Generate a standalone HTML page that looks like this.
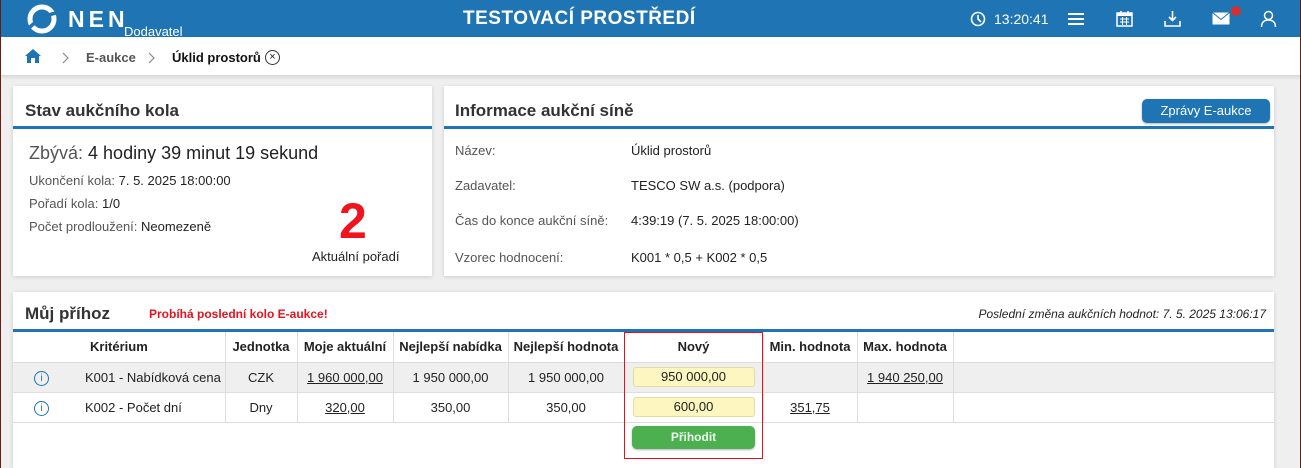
<!DOCTYPE html>
<html><head><meta charset="utf-8"><style>
*{box-sizing:border-box;margin:0;padding:0}
html,body{width:1301px;height:468px;overflow:hidden}
body{background:#efefef;font-family:"Liberation Sans",sans-serif;font-size:13px;color:#222;position:relative}
.edge{position:absolute;top:0;bottom:0;width:1px;background:#6b1a14}
.hdr{position:absolute;left:0;top:0;width:1301px;height:37px;background:#1f75b3;color:#fff}
.bc{position:absolute;left:0;top:37px;width:1301px;height:38px;background:#fff;box-shadow:0 2px 4px rgba(0,0,0,.12)}
.panel{position:absolute;background:#fff;box-shadow:0 1px 4px rgba(0,0,0,.15)}
.ptitle{font-size:17px;font-weight:bold;color:#333;position:absolute}
.bar{position:absolute;height:3px;background:#1f75b3}
.lbl{color:#555}
td,th{border-right:1px solid #ddd;text-align:center;font-size:13px;height:30px;padding:0}
th{font-weight:bold;color:#222}
tr.r td{border-top:1px solid #ddd}
.inp{display:inline-block;width:122px;height:20px;background:#fdf6c0;border:1px solid #e4dca0;border-radius:3px;line-height:18px;font-size:13px}
</style></head><body>
<div class="hdr">
 <svg style="position:absolute;left:27px;top:4px" width="30" height="30" viewBox="0 0 30 30"><circle cx="15" cy="15" r="12" fill="none" stroke="#fff" stroke-width="5"/><path d="M2 24 Q14 12 29 9" stroke="#1f75b3" stroke-width="3.5" fill="none"/></svg>
 <div style="position:absolute;left:68px;top:6px;font-size:23px;font-weight:bold;letter-spacing:4px">NEN</div>
 <div style="position:absolute;left:124px;top:24px;font-size:13px">Dodavatel</div>
 <div style="position:absolute;left:463px;top:8px;font-size:19px;font-weight:bold;letter-spacing:.5px">TESTOVACÍ PROSTŘEDÍ</div>
 <svg style="position:absolute;left:970px;top:11px" width="16" height="16" viewBox="0 0 16 16"><circle cx="8" cy="8" r="6.5" fill="none" stroke="#fff" stroke-width="1.6"/><path d="M8 4v4l3 3" stroke="#fff" stroke-width="1.6" fill="none"/></svg>
 <div style="position:absolute;left:994px;top:11px;font-size:14px">13:20:41</div>
 <svg style="position:absolute;left:1068px;top:12px" width="16" height="14"><path d="M0 2h16M0 7h16M0 12h16" stroke="#fff" stroke-width="2"/></svg>
 <svg style="position:absolute;left:1116px;top:10px" width="17" height="17" viewBox="0 0 17 17"><rect x="1" y="3" width="15" height="13" fill="none" stroke="#fff" stroke-width="1.5"/><rect x="1" y="3" width="15" height="3" fill="#fff"/><path d="M5 1v3M12 1v3" stroke="#fff" stroke-width="1.5"/><path d="M4 9h9M4 12h9M6.5 7v8M10.5 7v8" stroke="#fff"/></svg>
 <svg style="position:absolute;left:1164px;top:10px" width="17" height="17" viewBox="0 0 17 17"><path d="M8.5 1v9M5 7l3.5 3.5L12 7M1 11v5h15v-5" stroke="#fff" stroke-width="1.6" fill="none"/></svg>
 <svg style="position:absolute;left:1212px;top:12px" width="18" height="13"><rect x=".5" y=".5" width="17" height="12" fill="#fff"/><path d="M.5 .5l8.5 7 8.5-7" stroke="#1f75b3" fill="none"/></svg>
 <div style="position:absolute;left:1231px;top:6px;width:10px;height:10px;border-radius:50%;background:#d32f2f"></div>
 <svg style="position:absolute;left:1260px;top:10px" width="17" height="18" viewBox="0 0 17 18"><circle cx="8.5" cy="5.5" r="4" fill="none" stroke="#fff" stroke-width="1.5"/><path d="M1.5 17c0-5 3-7 7-7s7 2 7 7" fill="none" stroke="#fff" stroke-width="1.5"/></svg>
</div>
<div class="bc">
 <svg style="position:absolute;left:24px;top:11px" width="18" height="16" viewBox="0 0 18 16"><path d="M9 1L1 8h2v7h4v-5h4v5h4V8h2z" fill="#1f75b3"/></svg>
 <svg style="position:absolute;left:62px;top:15px" width="8" height="12"><path d="M1 1l5 5-5 5" stroke="#888" fill="none" stroke-width="1.2"/></svg>
 <div style="position:absolute;left:86px;top:13px;color:#555;font-weight:bold;font-size:13px">E-aukce</div>
 <svg style="position:absolute;left:148px;top:15px" width="8" height="12"><path d="M1 1l5 5-5 5" stroke="#888" fill="none" stroke-width="1.2"/></svg>
 <div style="position:absolute;left:172px;top:13px;font-weight:bold;font-size:13px;color:#111">Úklid prostorů</div>
 <div style="position:absolute;left:265px;top:13px;width:15px;height:15px;border:1px solid #333;border-radius:50%;font-size:11px;line-height:12px;text-align:center">×</div>
</div>

<div class="panel" style="left:13px;top:86px;width:419px;height:190px">
 <div class="ptitle" style="left:12px;top:15px">Stav aukčního kola</div>
 <div class="bar" style="left:0;top:40px;width:419px"></div>
 <div style="position:absolute;left:16px;top:57px;font-size:18px"><span class="lbl">Zbývá:</span> 4 hodiny 39 minut 19 sekund</div>
 <div style="position:absolute;left:16px;top:87px"><span class="lbl">Ukončení kola:</span> 7. 5. 2025 18:00:00</div>
 <div style="position:absolute;left:16px;top:110px"><span class="lbl">Pořadí kola:</span> 1/0</div>
 <div style="position:absolute;left:16px;top:133px"><span class="lbl">Počet prodloužení:</span> Neomezeně</div>
 <div style="position:absolute;left:326px;top:110px;font-size:50px;color:#f0141e;font-weight:bold;line-height:50px">2</div>
 <div style="position:absolute;left:299px;top:163px">Aktuální pořadí</div>
</div>

<div class="panel" style="left:444px;top:86px;width:830px;height:190px">
 <div class="ptitle" style="left:11px;top:15px">Informace aukční síně</div>
 <div style="position:absolute;left:698px;top:13px;width:128px;height:24px;background:#1f75b3;color:#fff;border-radius:5px;text-align:center;line-height:23px;font-size:13px;box-shadow:0 1px 2px rgba(0,0,0,.3)">Zprávy E-aukce</div>
 <div class="bar" style="left:0;top:40px;width:830px"></div>
 <div class="lbl" style="position:absolute;left:11px;top:57px">Název:</div><div style="position:absolute;left:187px;top:57px">Úklid prostorů</div>
 <div class="lbl" style="position:absolute;left:11px;top:92px">Zadavatel:</div><div style="position:absolute;left:187px;top:92px">TESCO SW a.s. (podpora)</div>
 <div class="lbl" style="position:absolute;left:11px;top:127px">Čas do konce aukční síně:</div><div style="position:absolute;left:187px;top:127px">4:39:19 (7. 5. 2025 18:00:00)</div>
 <div class="lbl" style="position:absolute;left:11px;top:164px">Vzorec hodnocení:</div><div style="position:absolute;left:187px;top:164px">K001 * 0,5 + K002 * 0,5</div>
</div>

<div class="panel" style="left:13px;top:292px;width:1261px;height:176px">
 <div class="ptitle" style="left:12px;top:12px">Můj příhoz</div>
 <div style="position:absolute;left:136px;top:15px;color:#e0141e;font-weight:bold;font-size:12px">Probíhá poslední kolo E-aukce!</div>
 <div style="position:absolute;right:8px;top:15px;font-style:italic;font-size:12px">Poslední změna aukčních hodnot: 7. 5. 2025 13:06:17</div>
 <div class="bar" style="left:0;top:37px;width:1261px"></div>
 <table style="position:absolute;left:0;top:40px;border-collapse:collapse;width:1261px">
  <tr><th style="width:57px;border-right:none"></th><th style="width:155px;text-align:left;padding-left:20px">Kritérium</th><th style="width:72px">Jednotka</th><th style="width:96px">Moje aktuální</th><th style="width:115px">Nejlepší nabídka</th><th style="width:116px">Nejlepší hodnota</th><th style="width:139px">Nový</th><th style="width:94px">Min. hodnota</th><th style="width:96px">Max. hodnota</th><th style="border-right:none"></th></tr>
  <tr class="r" style="background:#efefef"><td style="border-right:none"><span style="display:inline-block;width:15px;height:15px;border:1px solid #1f75b3;border-radius:50%;color:#1f75b3;font-size:10px;line-height:13px">i</span></td><td style="text-align:left;padding-left:15px">K001 - Nabídková cena</td><td>CZK</td><td><u>1 960 000,00</u></td><td>1 950 000,00</td><td>1 950 000,00</td><td><span class="inp">950 000,00</span></td><td></td><td><u>1 940 250,00</u></td><td style="border-right:none"></td></tr>
  <tr class="r"><td style="border-right:none"><span style="display:inline-block;width:15px;height:15px;border:1px solid #1f75b3;border-radius:50%;color:#1f75b3;font-size:10px;line-height:13px">i</span></td><td style="text-align:left;padding-left:15px">K002 - Počet dní</td><td>Dny</td><td><u>320,00</u></td><td>350,00</td><td>350,00</td><td><span class="inp">600,00</span></td><td><u>351,75</u></td><td></td><td style="border-right:none"></td></tr>
  <tr class="r"><td colspan="10" style="border-right:none;height:40px"></td></tr>
 </table>
 <div style="position:absolute;left:619px;top:134px;width:123px;height:23px;background:#4caf50;border-radius:5px;color:#eaffea;font-weight:bold;text-align:center;line-height:22px;font-size:12px;box-shadow:0 1px 2px rgba(0,0,0,.3)">Přihodit</div>
 <div style="position:absolute;left:611px;top:40px;width:139px;height:127px;border:1px solid #e0141e"></div>
</div>
<div class="edge" style="left:0"></div><div class="edge" style="left:1300px"></div>
</body></html>
